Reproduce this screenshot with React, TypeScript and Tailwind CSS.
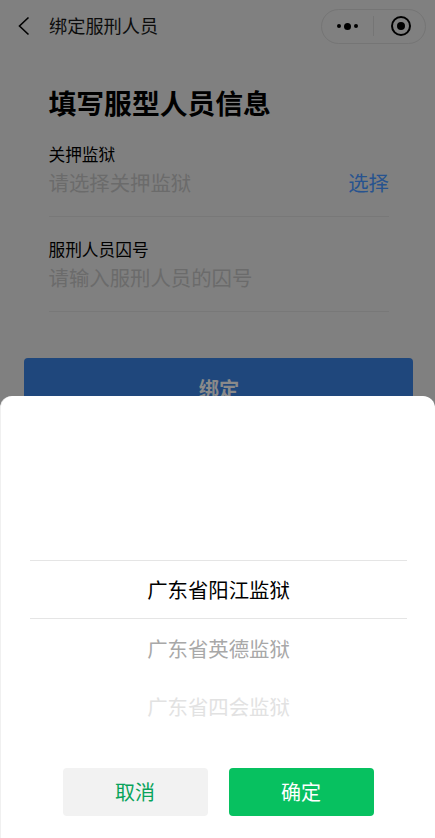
const CJK = "font-['Noto_Sans_CJK_SC','Noto_Sans',sans-serif]"

function NavBar() {
  return (
    <div className="flex h-[52px] items-center">
      <svg width="14" height="22" viewBox="0 0 14 22" className="ml-[17px]" fill="none">
        <path d="M11.5 2.5 L2.5 11 L11.5 19.5" stroke="#000" strokeWidth="1.6" />
      </svg>
      <span className="ml-[18px] text-[18.2px] text-[#0d0d0d]">绑定服刑人员</span>
      <div className="ml-auto mr-[9px] flex h-[35px] w-[105px] items-center rounded-full border border-[#757575]">
        <div className="flex w-[51px] items-center justify-center gap-[3px]">
          <span className="h-[4px] w-[4px] rounded-full bg-black" />
          <span className="h-[7px] w-[7px] rounded-full bg-black" />
          <span className="h-[4px] w-[4px] rounded-full bg-black" />
        </div>
        <div className="h-[20px] w-px bg-[#757575]" />
        <div className="flex flex-1 items-center justify-center pl-[2px]">
          <span className="flex h-[20px] w-[20px] items-center justify-center rounded-full border-[2.5px] border-black">
            <span className="h-[8px] w-[8px] rounded-full bg-black" />
          </span>
        </div>
      </div>
    </div>
  )
}

function Field({ label, hint, action }: { label: string; hint: string; action?: string }) {
  return (
    <div className="h-[95px] border-b border-[#787878] pt-[22px]">
      <div className="text-[16.7px] leading-[20px] text-black">{label}</div>
      <div className="mt-[4px] flex items-center justify-between text-[20.4px] leading-[28px]">
        <span className="text-[#6b6b6b]">{hint}</span>
        {action && <span className="text-[#27538f]">{action}</span>}
      </div>
    </div>
  )
}

export default function App() {
  return (
    <div className={`relative h-[838px] w-[435px] overflow-hidden bg-[#808080] ${CJK}`}>
      <div>
        <NavBar />
        <div className="pl-[48.5px] pr-[46px]">
          <h1 className="mt-[31px] text-[27.8px] font-bold leading-[39px] text-black">填写服型人员信息</h1>
          <Field label="关押监狱" hint="请选择关押监狱" action="选择" />
          <Field label="服刑人员囚号" hint="请输入服刑人员的囚号" />
        </div>
        <div className="ml-[24px] mt-[46px] flex h-[60px] w-[389px] items-center justify-center rounded-[4px] bg-[#1f477c] pl-px text-[20.3px] font-bold text-[#8a8a8a]">
          绑定
        </div>
      </div>

      {/* Picker sheet over the dimmed page */}
      <div className="absolute inset-x-0 bottom-0 top-[396px] flex flex-col rounded-t-[12px] border-l border-[#f0f0f0] bg-white">
        <div className="ml-[29px] mr-[28px] mt-[164px]">
          <div className="flex h-[59px] items-center justify-center border-y border-[#e5e5e5] text-[20.4px] text-black">
            广东省阳江监狱
          </div>
          <div className="flex h-[58px] items-center justify-center text-[20.4px] text-[#a8a8a8]">广东省英德监狱</div>
          <div className="flex h-[58px] items-center justify-center text-[20.4px] text-[#e2e2e2]">广东省四会监狱</div>
        </div>
        <div className="mt-[33px] flex justify-center gap-[21px]">
          <div className="flex h-[48px] w-[145px] items-center justify-center rounded-[4px] bg-[#f2f2f2] text-[20px] text-[#07a35a]">
            取消
          </div>
          <div className="flex h-[48px] w-[145px] items-center justify-center rounded-[4px] bg-[#07c160] text-[20px] text-white">
            确定
          </div>
        </div>
      </div>
    </div>
  )
}
